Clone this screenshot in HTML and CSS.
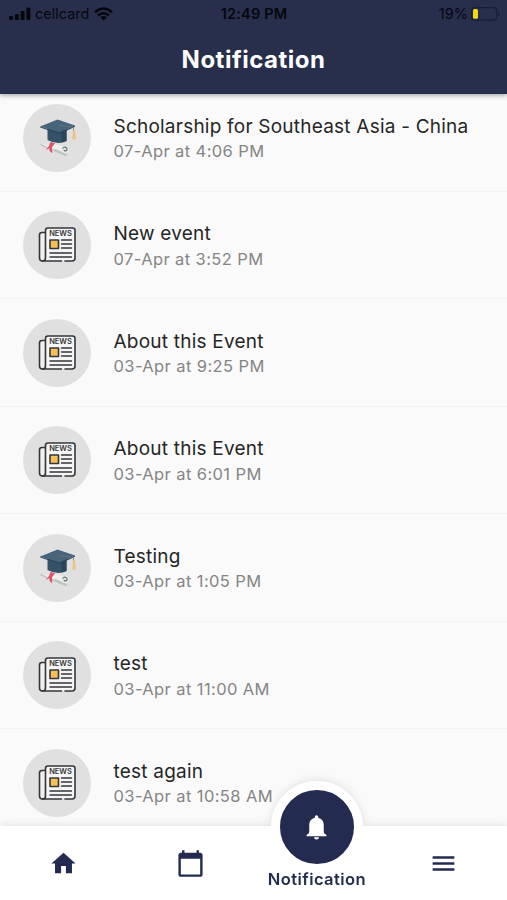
FILE: index.html
```
<!DOCTYPE html>
<html lang="en">
<head>
<meta charset="utf-8">
<title>Notification</title>
<link rel="stylesheet" href="styles.css">
</head>
<body>
<svg class="defs" width="0" height="0" aria-hidden="true">
  <symbol id="cap" viewBox="0 0 68 68">
    <path d="M17.500 40.500L43 51.500" stroke="#bdc5c4" stroke-width="1.500"/>
    <path d="M19 40l8 1 3 4-3 0z" fill="#e8ebe9"/>
    <path d="M31 40l11 3-1 6-13-5z" fill="#eef0ee"/>
    <path d="M32 45.500l12 5.500" stroke="#bcc3c3" stroke-width="1.400"/>
    <ellipse cx="42" cy="45.500" rx="3.800" ry="3.600" fill="#e9ecea"/>
    <path d="M39.500 44.500c2-2.500 5-1 4.500 1.200-.6 1.700-3 1.500-2.900-.1" fill="none" stroke="#66717a" stroke-width="1.200"/>
    <path d="M27.500 38l4.500 1.200-3 4 .2 6-2.400-2-.6-3-3.700 1.800 3.500-4z" fill="#e05562"/>
    <path d="M24.500 24.500h19v12.500q-9 4.500-19-1z" fill="#365269"/>
    <path d="M43.500 25v12l-5 1.500V27z" fill="#2b455b"/>
    <path d="M17.200 22.500L34.500 15.500 52 21.500 36.500 28.500z" fill="#48647b"/>
    <path d="M17.200 22.500L36.500 28.500 52 21.500v1.200L36.500 30 17.200 23.500z" fill="#2c465d"/>
    <path d="M36 21.500l14.500 1.700v5" fill="none" stroke="#6f7478" stroke-width=".8"/>
    <path d="M50 26.500h2.200l.8 9h-3.800z" fill="#edc583"/>
  </symbol>
  <symbol id="news" viewBox="0 0 68 68">
    <g fill="none" stroke="#34363a" stroke-width="1.600" stroke-linecap="round" stroke-linejoin="round">
      <path d="M22.500 21.500h-3.500q-2.500 0-2.500 2.500v23q0 3 3 3h1" fill="#f0f0f0"/>
      <path d="M19.500 50q3 0 3-3V19.500q0-2.500 2.500-2.500h24.500q2.500 0 2.500 2.500V47q0 3-3 3H42M38.500 50h-19" fill="#f5f5f5"/>
      <path d="M38.500 29h10M38.500 33h10M38.500 37h10M27 42h21.500M27 46h21.500" stroke-width="1.400"/>
      <path d="M27 29h8.500v8.500H27z" fill="#f7bf57"/>
    </g>
  </symbol>
</svg>
<div class="app">
  <header class="header">
    <div class="status">
      <div class="carrier">
        <svg width="22" height="14" viewBox="0 0 22 14"><rect x="0" y="9" width="4" height="4" rx="1"/><rect x="5.800" y="7" width="4" height="6" rx="1"/><rect x="11.600" y="4" width="4" height="9" rx="1"/><rect x="17.400" y="0.500" width="4" height="12.500" rx="1"/></svg>
        <span class="carrier-name">cellcard</span>
        <svg width="19" height="14" viewBox="0 0 19 14"><g fill="none" stroke="#05070d" stroke-width="2.500"><path d="M1 5.200Q9.500-2.200 18 5.200"/><path d="M4 8.500q5.500-4.600 11 0"/></g><path d="M9.500 13.600L6.200 10.300q3.300-2.600 6.600 0z"/></svg>
      </div>
      <div class="time">12:49 PM</div>
      <div class="power">
        <span>19%</span>
        <svg width="29" height="14" viewBox="0 0 29 14"><rect x="0.700" y="0.700" width="25" height="12.400" rx="3" fill="none" stroke="#171e37" stroke-width="1.200"/><rect x="2" y="2" width="5" height="9.800" rx="1.500" fill="#f7d80f"/><path class="battery-tip" d="M27 4.500q3 2.500 0 5z"/></svg>
      </div>
    </div>
    <h1 class="title">Notification</h1>
  </header>
  <main class="list">
    <article class="row"><div class="avatar"><svg><use href="#cap"/></svg></div><div class="info"><h2 class="name">Scholarship for Southeast Asia - China</h2><p class="date">07-Apr at 4:06 PM</p></div></article>
    <article class="row"><div class="avatar"><svg><use href="#news"/></svg><span class="news-label">NEWS</span></div><div class="info"><h2 class="name">New event</h2><p class="date">07-Apr at 3:52 PM</p></div></article>
    <article class="row"><div class="avatar"><svg><use href="#news"/></svg><span class="news-label">NEWS</span></div><div class="info"><h2 class="name">About this Event</h2><p class="date">03-Apr at 9:25 PM</p></div></article>
    <article class="row"><div class="avatar"><svg><use href="#news"/></svg><span class="news-label">NEWS</span></div><div class="info"><h2 class="name">About this Event</h2><p class="date">03-Apr at 6:01 PM</p></div></article>
    <article class="row"><div class="avatar"><svg><use href="#cap"/></svg></div><div class="info"><h2 class="name">Testing</h2><p class="date">03-Apr at 1:05 PM</p></div></article>
    <article class="row"><div class="avatar"><svg><use href="#news"/></svg><span class="news-label">NEWS</span></div><div class="info"><h2 class="name">test</h2><p class="date">03-Apr at 11:00 AM</p></div></article>
    <article class="row"><div class="avatar"><svg><use href="#news"/></svg><span class="news-label">NEWS</span></div><div class="info"><h2 class="name">test again</h2><p class="date">03-Apr at 10:58 AM</p></div></article>
  </main>
  <nav class="nav">
    <a class="tab"><svg class="icon" viewBox="0 0 24 24"><path d="M10 20v-6h4v6h5v-8h3L12 3 2 12h3v8z"/></svg></a>
    <a class="tab"><svg class="icon" viewBox="0 0 24 24"><path d="M20 3h-1V1h-2v2H7V1H5v2H4c-1.100 0-2 .9-2 2v16c0 1.100.9 2 2 2h16c1.100 0 2-.9 2-2V5c0-1.100-.9-2-2-2zm0 18H4V8h16v13z"/></svg></a>
    <a class="tab tab-active"><span class="bubble"><svg class="icon" viewBox="0 0 24 24"><path d="M10 20h4c0 1.100-.9 1.900-2 1.900s-2-.8-2-1.900zM12 1.800c.8 0 1.400.6 1.400 1.400v.7c2.900.7 4.600 2.900 4.600 6V15c0 1.500.7 2.200 2.200 3v1.300H3.800V18C5.300 17.200 6 16.500 6 15V9.900c0-3.100 1.700-5.300 4.600-6v-.7c0-.8.6-1.400 1.400-1.400z"/></svg></span><span class="tab-label">Notification</span></a>
    <a class="tab"><svg class="icon" viewBox="0 0 24 24"><path d="M3 18h18v-2H3v2zm0-5h18v-2H3v2zm0-7v2h18V6H3z"/></svg></a>
  </nav>
</div>
</body>
</html>
```
FILE: styles.css
```
* { box-sizing: border-box; }
body { margin: 0; font-family: Inter, "Liberation Sans", sans-serif; }
h1, h2, p { margin: 0; }
.defs { display: block; height: 0; }
.app { width: 507px; height: 900px; display: flex; flex-direction: column; overflow: hidden; background: #fafafa; }
.header { height: 94px; flex: none; background: #272f4d; box-shadow: 0 1px 5px rgba(0, 0, 0, .4); z-index: 1; color: #05070d; }
.status { height: 28px; display: grid; grid-template-columns: 1fr auto 1fr; align-items: center; padding: 0 8px 0 9px; font-size: 14.500px; line-height: 18px; }
.status svg { display: block; fill: #05070d; }
.status .battery-tip { fill: #171e37; }
.carrier, .power { display: flex; align-items: center; }
.carrier { gap: 4px; }
.carrier-name { letter-spacing: 0; margin-right: 1px; }
.time { font-weight: 600; letter-spacing: .2px; }
.power { justify-content: flex-end; gap: 3px; margin-right: -1px; }
.title { margin-top: 16px; text-align: center; font-size: 24px; line-height: 32px; font-weight: 700; letter-spacing: .5px; color: #fff; }
.list { flex: 1; min-height: 0; overflow: hidden; }
.row { height: 107.500px; display: flex; align-items: center; padding: 1px 0 0 23px; gap: 22.500px; border-bottom: 1px solid #f2f2f2; }
.row:first-child { margin-top: -10px; }
.avatar { position: relative; width: 68px; height: 68px; flex: none; border-radius: 50%; background: #e0e0e0; }
.avatar svg { display: block; width: 68px; height: 68px; }
.news-label { position: absolute; top: 18px; left: 23px; width: 29px; text-align: center; font-size: 7.500px; line-height: 10px; font-weight: 600; color: #34363a; }
.info { padding-top: 1.200px; }
.name { font-size: 19px; line-height: 25.500px; font-weight: 400; letter-spacing: .22px; color: #262626; white-space: nowrap; }
.date { font-size: 16.500px; line-height: 24px; letter-spacing: .4px; color: #858585; }
.nav { height: 74px; flex: none; display: grid; grid-template-columns: repeat(4, 1fr); background: #fff; filter: drop-shadow(0 -1px 4px rgba(0, 0, 0, .1)); color: #232c50; }
.tab { display: flex; flex-direction: column; align-items: center; justify-content: center; }
.icon { width: 29px; height: 29px; fill: currentColor; }
.tab-active { justify-content: flex-start; }
.bubble { width: 92px; height: 92px; flex: none; margin-top: -45px; border: 9px solid #fff; border-radius: 50%; background: #232c50; color: #fff; display: flex; align-items: center; justify-content: center; }
.tab-label { margin-top: -4px; font-size: 16.500px; line-height: 20px; font-weight: 600; letter-spacing: .42px; }
```
